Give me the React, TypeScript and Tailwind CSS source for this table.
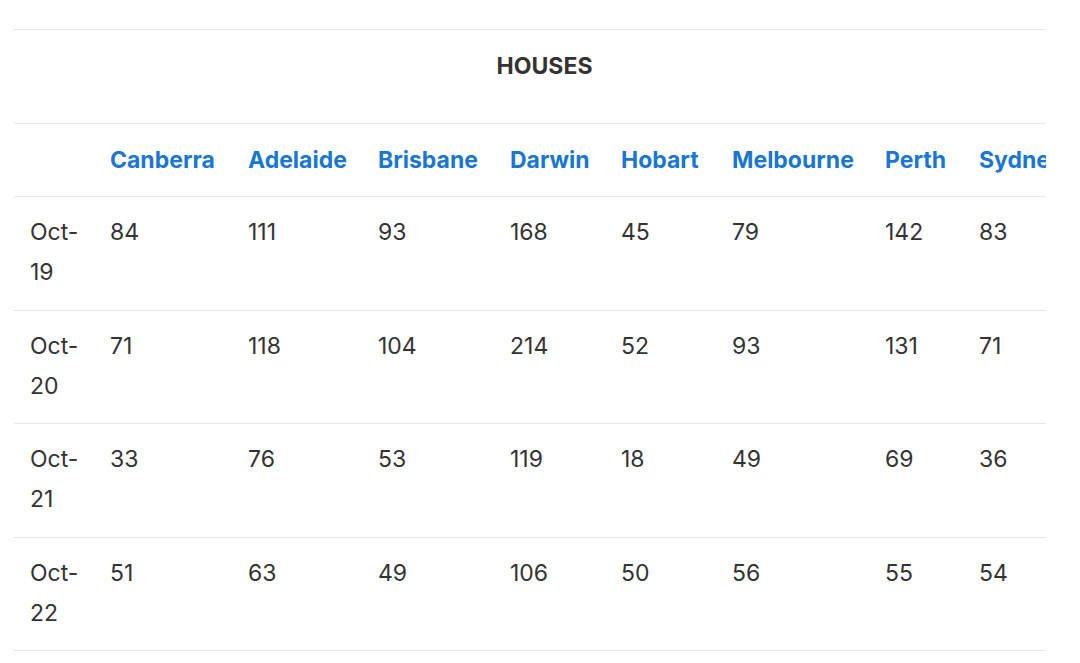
const cities = [
  { name: "Canberra", w: 138 },
  { name: "Adelaide", w: 130 },
  { name: "Brisbane", w: 132 },
  { name: "Darwin", w: 111 },
  { name: "Hobart", w: 111 },
  { name: "Melbourne", w: 153 },
  { name: "Perth", w: 94 },
  { name: "Sydney", w: 112 },
];

const rows = [
  { month: "Oct-", year: "19", values: [84, 111, 93, 168, 45, 79, 142, 83] },
  { month: "Oct-", year: "20", values: [71, 118, 104, 214, 52, 93, 131, 71] },
  { month: "Oct-", year: "21", values: [33, 76, 53, 119, 18, 49, 69, 36] },
  { month: "Oct-", year: "22", values: [51, 63, 49, 106, 50, 56, 55, 54] },
];

export default function App() {
  return (
    <div className="min-h-[663px] bg-white pt-[29px] px-[14px] font-['Inter','Noto_Sans',sans-serif] text-[23px] leading-[40px] text-[#333]">
      <div className="w-[1032px] overflow-hidden">
        <table className="table-fixed border-collapse w-[1061px]">
          <colgroup>
            <col style={{ width: 80 }} />
            {cities.map((c) => (
              <col key={c.name} style={{ width: c.w }} />
            ))}
          </colgroup>
          <thead>
            <tr className="border-t border-b border-[#e3e5e9]">
              <th colSpan={9} className="pt-[16px] pb-[37px] text-center font-bold text-[#333]">
                HOUSES
              </th>
            </tr>
            <tr className="border-b border-[#e3e5e9]">
              <th className="pl-4 pt-[16px] pb-[16px]"></th>
              {cities.map((c) => (
                <th
                  key={c.name}
                  className="pl-4 pt-[16px] pb-[16px] text-left font-bold text-[#1976d2] whitespace-nowrap"
                >
                  {c.name}
                </th>
              ))}
            </tr>
          </thead>
          <tbody>
            {rows.map((r) => (
              <tr key={r.year} className="border-b border-[#e3e5e9] align-top">
                <td className="pl-4 pt-[15px] pb-[17.5px]">
                  {r.month}
                  <br />
                  {r.year}
                </td>
                {r.values.map((v, i) => (
                  <td key={i} className="pl-4 pt-[15px] pb-[17.5px]">
                    {v}
                  </td>
                ))}
              </tr>
            ))}
          </tbody>
        </table>
      </div>
    </div>
  );
}
